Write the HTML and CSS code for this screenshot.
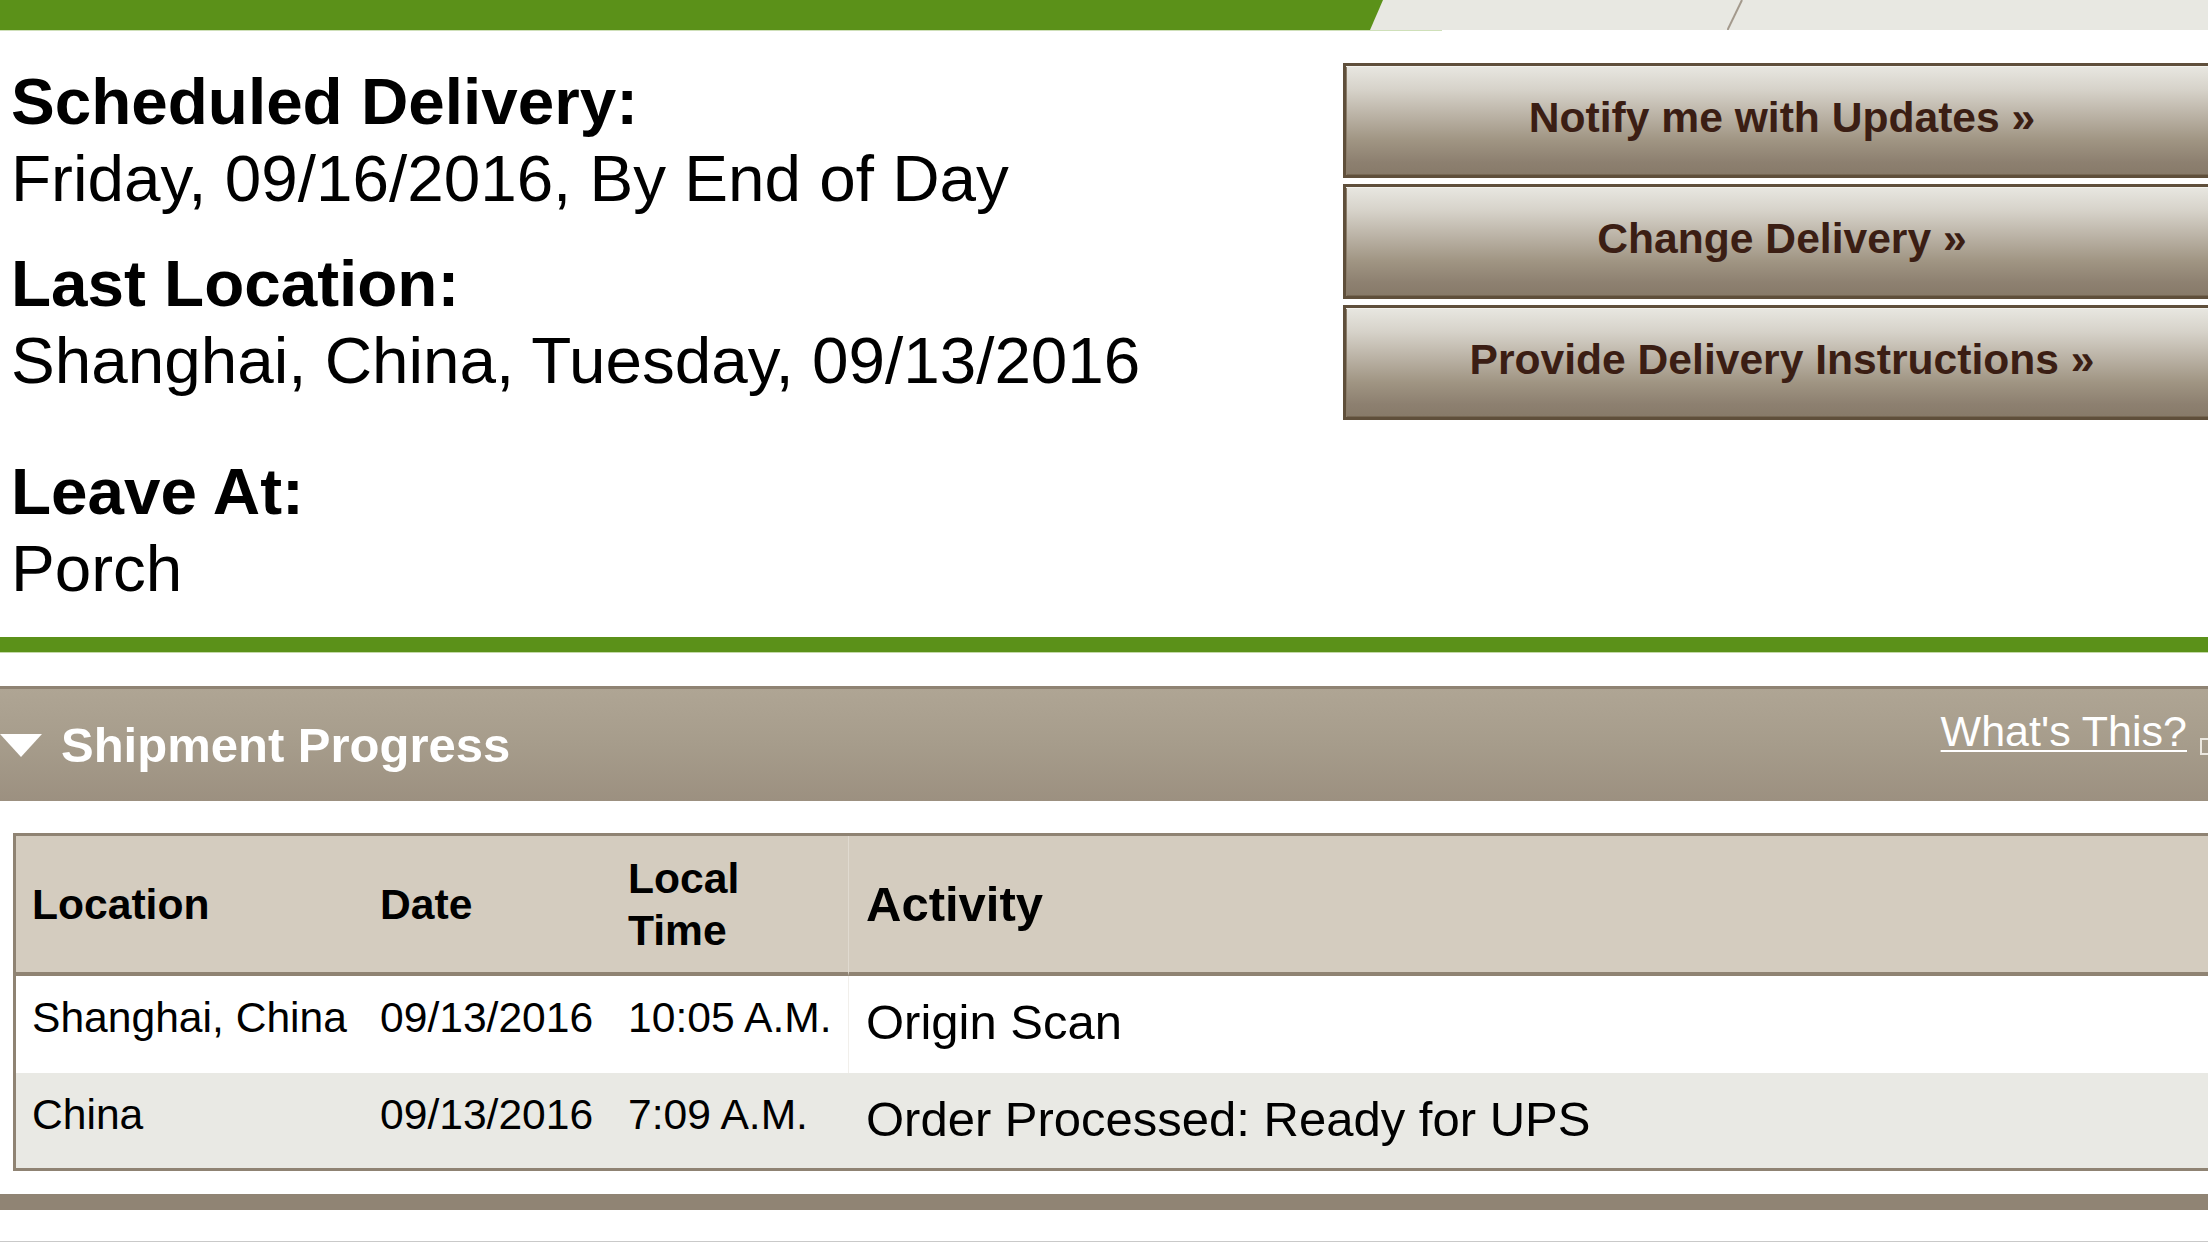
FILE: index.html
```html
<!DOCTYPE html>
<html lang="en">
<head>
<meta charset="utf-8">
<title>Shipment Progress</title>
<link rel="stylesheet" href="styles.css">
</head>
<body>
<div class="page">
  <div class="topbar">
    <div class="topbar-green"></div>
    <svg class="topbar-sep" width="16" height="30" viewBox="0 0 16 30"><line x1="15" y1="0" x2="0.5" y2="30" stroke="#a3998c" stroke-width="2"/></svg>
  </div>
  <div class="topbar-edge"></div>

  <div class="summary">
    <div class="info">
      <div class="info-block">
        <div class="info-label">Scheduled Delivery:</div>
        <div class="info-value">Friday, 09/16/2016, By End of Day</div>
      </div>
      <div class="info-block">
        <div class="info-label">Last Location:</div>
        <div class="info-value">Shanghai, China, Tuesday, 09/13/2016</div>
      </div>
      <div class="info-block info-block-leave">
        <div class="info-label">Leave At:</div>
        <div class="info-value">Porch</div>
      </div>
    </div>
    <div class="actions">
      <a class="action-btn" href="#">Notify me with Updates »</a>
      <a class="action-btn" href="#">Change Delivery »</a>
      <a class="action-btn" href="#">Provide Delivery Instructions »</a>
    </div>
  </div>

  <div class="green-rule"></div>

  <div class="section-head">
    <span class="caret"></span>
    <span class="section-title">Shipment Progress</span>
    <div class="help">
      <a class="help-link" href="#">What's This?</a>
      <svg class="help-icon" width="16" height="17" viewBox="0 0 16 17"><rect x="1" y="1" width="14" height="15" fill="none" stroke="#ebe7df" stroke-width="2"/></svg>
    </div>
  </div>

  <table class="progress">
    <colgroup>
      <col class="c-loc">
      <col class="c-date">
      <col class="c-time">
      <col class="c-act">
    </colgroup>
    <thead>
      <tr class="head-row">
        <th>Location</th>
        <th>Date</th>
        <th>Local<br>Time</th>
        <th class="act">Activity</th>
      </tr>
    </thead>
    <tbody>
      <tr class="row-odd">
        <td>Shanghai, China</td>
        <td>09/13/2016</td>
        <td>10:05 A.M.</td>
        <td class="act">Origin Scan</td>
      </tr>
      <tr class="row-even">
        <td>China</td>
        <td>09/13/2016</td>
        <td>7:09 A.M.</td>
        <td class="act">Order Processed: Ready for UPS</td>
      </tr>
    </tbody>
  </table>

  <div class="bottom-bar"></div>
  <div class="footer-line"></div>
</div>
</body>
</html>
```
FILE: styles.css
```css
html, body {
  margin: 0;
  padding: 0;
  overflow: hidden;
  background: #ffffff;
}

body {
  font-family: "Liberation Sans", Arial, Helvetica, sans-serif;
  color: #000;
}

.page {
  width: 2240px;
}

/* top tab bar */
.topbar {
  height: 30px;
  background: #e8e8e2;
  display: flex;
  align-items: stretch;
}

.topbar-green {
  width: 1383px;
  background: #5b9119;
  clip-path: polygon(0 0, 100% 0, calc(100% - 13px) 100%, 0 100%);
}

.topbar-sep {
  margin-left: 344px;
  display: block;
}

.topbar-edge {
  width: 1442px;
  height: 1px;
  background: #cfe0b9;
}

/* summary area */
.summary {
  display: flex;
  justify-content: space-between;
  align-items: flex-start;
  padding-top: 32px;
  padding-right: 19px;
}

.info {
  padding-left: 11px;
}

.info-label,
.info-value {
  font-size: 65.6px;
  line-height: 77px;
  white-space: nowrap;
}

.info-label {
  font-weight: bold;
}

.info-block + .info-block {
  margin-top: 28px;
}

.info-block.info-block-leave {
  margin-top: 54px;
}

.actions {
  width: 878px;
  display: flex;
  flex-direction: column;
  gap: 6px;
}

.action-btn {
  box-sizing: border-box;
  height: 115px;
  display: flex;
  align-items: center;
  justify-content: center;
  padding-bottom: 6px;
  border: 3px solid #5f4f3b;
  background: linear-gradient(to bottom, #e8e7e1 0%, #d6d2c9 22%, #bbb3a6 45%, #a09583 68%, #8d8070 88%, #877a69 100%);
  box-shadow: inset 0 1px 0 #f3f2ed, inset 1px 0 0 #8a7c69, inset 0 -1px 0 #766753;
  color: #3b1e14;
  font-size: 42.6px;
  font-weight: bold;
  text-decoration: none;
  white-space: nowrap;
}

/* green separator */
.green-rule {
  margin-top: 30px;
  height: 15px;
  background: #5b9119;
  border-bottom: 1px solid #c4d9a8;
}

/* section header */
.section-head {
  margin-top: 33px;
  height: 112px;
  border-top: 3px solid #8f8373;
  background: linear-gradient(to bottom, #afa594 0%, #a69c8b 50%, #9c9080 100%);
  display: flex;
  align-items: center;
  padding-right: 24px;
}

.caret {
  width: 0;
  height: 0;
  border-left: 21px solid transparent;
  border-right: 21px solid transparent;
  border-top: 23px solid #ffffff;
}

.section-title {
  margin-left: 19px;
  color: #ffffff;
  font-size: 49px;
  font-weight: bold;
  white-space: nowrap;
}

.help {
  margin-left: auto;
  align-self: flex-start;
  margin-top: 18px;
  display: flex;
  align-items: flex-end;
  gap: 13px;
}

.help-link {
  color: #ffffff;
  font-size: 43px;
  text-decoration: underline;
  text-decoration-thickness: 2px;
  text-underline-offset: 4px;
  white-space: nowrap;
}

.help-icon {
  display: block;
  margin-bottom: 1px;
}

/* progress table */
.progress {
  margin-top: 32px;
  margin-left: 13px;
  width: 2227px;
  table-layout: fixed;
  border-collapse: separate;
  border-spacing: 0;
  border-top: 3px solid #8f8373;
  border-left: 3px solid #8f8373;
  border-bottom: 3px solid #8f8373;
}

.c-loc { width: 348px; }
.c-date { width: 248px; }
.c-time { width: 236px; }

.head-row {
  height: 140px;
}

.progress th {
  background: #d4ccbf;
  border-bottom: 4px solid #8f8373;
  text-align: left;
  vertical-align: middle;
  font-size: 42.6px;
  font-weight: bold;
  line-height: 52px;
  padding: 0 0 0 16px;
  white-space: nowrap;
}

.progress th.act {
  font-size: 49px;
  padding-left: 17px;
  border-left: 1px solid #e0dad0;
}

.progress td {
  vertical-align: top;
  font-size: 42.6px;
  padding: 17px 0 0 16px;
  white-space: nowrap;
}

.progress td.act {
  font-size: 49px;
  padding-top: 18px;
  padding-left: 17px;
  border-left: 1px solid #f1efeb;
}

.row-odd {
  height: 97px;
  background: #ffffff;
}

.row-even {
  height: 95px;
  background: #e9e9e4;
}

.row-even td.act {
  border-left-color: #e9e9e4;
}

/* bottom */
.bottom-bar {
  margin-top: 23px;
  height: 16px;
  background: #908474;
}

.footer-line {
  margin-top: 31px;
  height: 1px;
  background: #c9c9c9;
}
```
